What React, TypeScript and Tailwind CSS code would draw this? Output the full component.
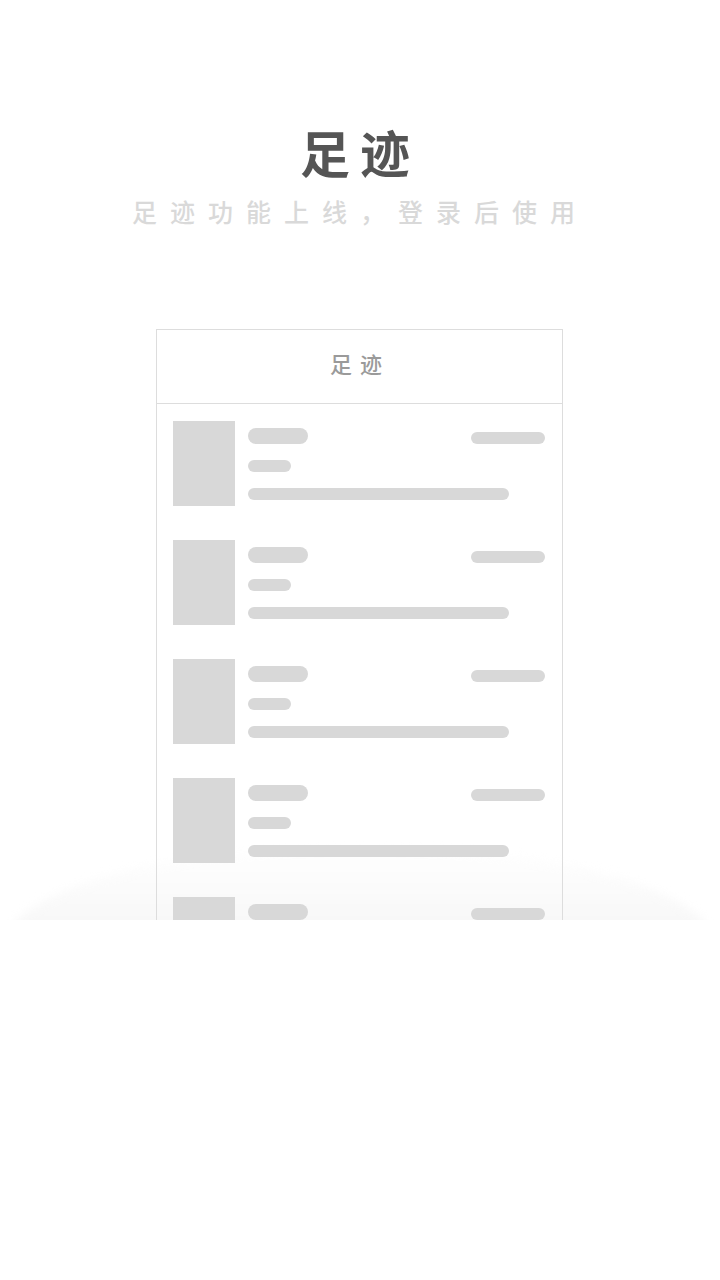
const rows = [421, 541, 659, 778, 896];

function SkeletonRow() {
  return (
    <div className="flex h-[85px] shrink-0">
      <div className="w-[62px] h-[85px] bg-[#d8d8d8]" />
      <div className="relative flex-1 ml-[13px] mr-[17px]">
        <div className="absolute left-0 top-[7px] w-[60px] h-[16px] rounded-full bg-[#d8d8d8]" />
        <div className="absolute right-0 top-[11px] w-[74px] h-[12px] rounded-full bg-[#d8d8d8]" />
        <div className="absolute left-0 top-[39px] w-[43px] h-[12px] rounded-full bg-[#d8d8d8]" />
        <div className="absolute left-0 top-[67px] w-[261px] h-[12px] rounded-full bg-[#d8d8d8]" />
      </div>
    </div>
  );
}

export default function App() {
  return (
    <div
      className="w-[720px] h-[1280px] bg-white"
      style={{ fontFamily: '"Noto Sans CJK SC", "Noto Sans", sans-serif' }}
    >
      <div className="relative h-[920px] overflow-hidden">
        {/* soft floor glow behind the card */}
        <div className="absolute left-[5px] top-[846px] w-[710px] h-[200px] rounded-[50%] blur-[4px] bg-gradient-to-b from-white to-[#ededed]" />

        <div className="relative flex flex-col items-center">
          <h1 className="mt-[119px] h-[64px] leading-[64px] text-[50px] font-bold text-[#555555] tracking-[10px]">
            足迹
          </h1>
          <p className="h-[56px] leading-[56px] text-[25px] font-medium text-[#d9d9d9] tracking-[13px]">
            足迹功能上线，登录后使用
          </p>

          <div className="mt-[90px] mr-[2px] w-[407px] border border-[#dddddd] border-b-0 flex flex-col">
            <div className="h-[74px] flex items-center justify-center border-b border-[#dddddd] text-[22px] font-medium text-[#9a9a9a] tracking-[8px] pl-[2px] pb-[6px]">
              足迹
            </div>
            <div className="flex flex-col pl-[16px] pt-[17px] gap-[34px]">
              {rows.map((r) => (
                <SkeletonRow key={r} />
              ))}
            </div>
          </div>
        </div>
      </div>
    </div>
  );
}
